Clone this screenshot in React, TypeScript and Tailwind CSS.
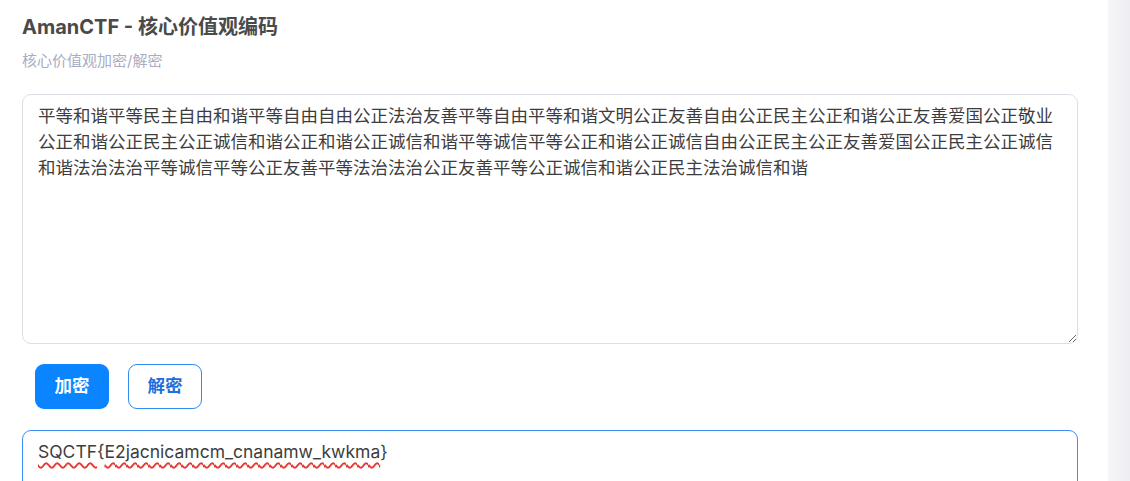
import { useState } from "react";

const cipher =
  "平等和谐平等民主自由和谐平等自由自由公正法治友善平等自由平等和谐文明公正友善自由公正民主公正和谐公正友善爱国公正敬业公正和谐公正民主公正诚信和谐公正和谐公正诚信和谐平等诚信平等公正和谐公正诚信自由公正民主公正友善爱国公正民主公正诚信和谐法治法治平等诚信平等公正友善平等法治法治公正友善平等公正诚信和谐公正民主法治诚信和谐";

const font = "font-['Inter','Noto_Sans_CJK_SC',sans-serif]";

export default function App() {
  const [input, setInput] = useState(cipher);

  return (
    <div className={`flex h-[481px] w-full overflow-hidden bg-white ${font}`}>
      <main className="flex min-w-0 flex-1 flex-col pl-[22px] pr-[30px]">
        <header className="shrink-0 pt-[13px]">
          <h1 className="text-[20px] font-bold leading-[28px] text-[#4a4a4a]">
            AmanCTF - 核心价值观编码
          </h1>
          <p className="mt-[10px] text-[15px] leading-[20px] text-[#a9adc4]">
            核心价值观加密/解密
          </p>
        </header>

        <textarea
          value={input}
          onChange={(e) => setInput(e.target.value)}
          spellCheck={false}
          className="mt-[23px] h-[250px] w-full shrink-0 resize-y rounded-[9px] border border-[#dcdfe6] px-[15px] py-[8px] text-[17.5px] leading-[26px] text-[#3d3d3d] outline-none"
        />

        <div className="flex shrink-0 gap-[19px] pl-[13px] pt-[20px]">
          <button className="h-[45px] w-[74px] rounded-[9px] bg-[#0a84ff] text-[17.5px] font-bold text-white">
            加密
          </button>
          <button className="h-[45px] w-[74px] rounded-[9px] border border-[#2f8cf0] bg-white text-[17.5px] font-bold text-[#1a6fe0]">
            解密
          </button>
        </div>

        {/* output box, shown focused with the browser's spellcheck marks */}
        <div className="mt-[21px] h-[200px] shrink-0 rounded-t-[9px] border border-[#3b8ff5] px-[15px] py-[8px] text-[17.5px] leading-[26px] text-[#3d3d3d]">
          <span className="underline decoration-[#e53935] decoration-wavy decoration-[1.5px] underline-offset-[4px]">
            SQCTF
          </span>
          {"{"}
          <span className="underline decoration-[#e53935] decoration-wavy decoration-[1.5px] underline-offset-[4px]">
            E2jacnicamcm_cnanamw_kwkma
          </span>
          {"}"}
        </div>
      </main>
      <aside className="w-[22px] shrink-0 bg-gradient-to-r from-[#f6f6f8] to-[#eeeef2]" />
    </div>
  );
}
